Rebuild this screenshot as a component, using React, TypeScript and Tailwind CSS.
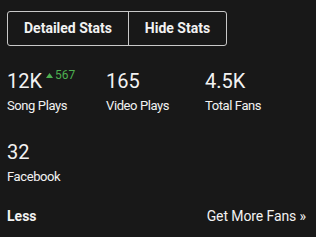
export default function App() {
  return (
    <div
      className="w-[316px] h-[237px] bg-[#181818] text-[#f2f2f2] px-[7px] pt-[11px]"
      style={{ fontFamily: "Roboto, 'Liberation Sans', sans-serif" }}
    >
      {/* Toggle buttons */}
      <div className="flex w-[220px] h-[35px] border border-[#c8c8c8] rounded-[3px]">
        <button className="w-[121px] font-bold text-[14px] border-r border-[#c8c8c8]">
          Detailed Stats
        </button>
        <button className="flex-1 font-bold text-[14px]">Hide Stats</button>
      </div>

      {/* Stats */}
      <div className="grid grid-cols-3 w-[297px] mt-[21px] gap-y-[24px]">
        <div>
          <div className="flex items-start">
            <span className="text-[20px] leading-[28px]">12K</span>
            <span className="flex items-center text-[12px] leading-[14px] text-[#4caf50] ml-[4px] mt-[1px]">
              <svg width="7" height="5" viewBox="0 0 7 5" className="mr-[2px]">
                <path d="M3.5 0L7 5H0z" fill="#4caf50" />
              </svg>
              567
            </span>
          </div>
          <div className="text-[13px] tracking-[-0.4px] leading-[16px] mt-[3px]">Song Plays</div>
        </div>
        <div>
          <div className="text-[20px] leading-[28px]">165</div>
          <div className="text-[13px] tracking-[-0.4px] leading-[16px] mt-[3px]">Video Plays</div>
        </div>
        <div>
          <div className="text-[20px] leading-[28px]">4.5K</div>
          <div className="text-[13px] tracking-[-0.4px] leading-[16px] mt-[3px]">Total Fans</div>
        </div>
        <div>
          <div className="text-[20px] leading-[28px]">32</div>
          <div className="text-[13px] tracking-[-0.4px] leading-[16px] mt-[3px]">Facebook</div>
        </div>
      </div>

      {/* Footer */}
      <div className="flex justify-between items-center w-[299px] mt-[21px]">
        <span className="font-bold text-[14px]">Less</span>
        <span className="text-[14px] tracking-[-0.1px]">Get More Fans »</span>
      </div>
    </div>
  );
}
